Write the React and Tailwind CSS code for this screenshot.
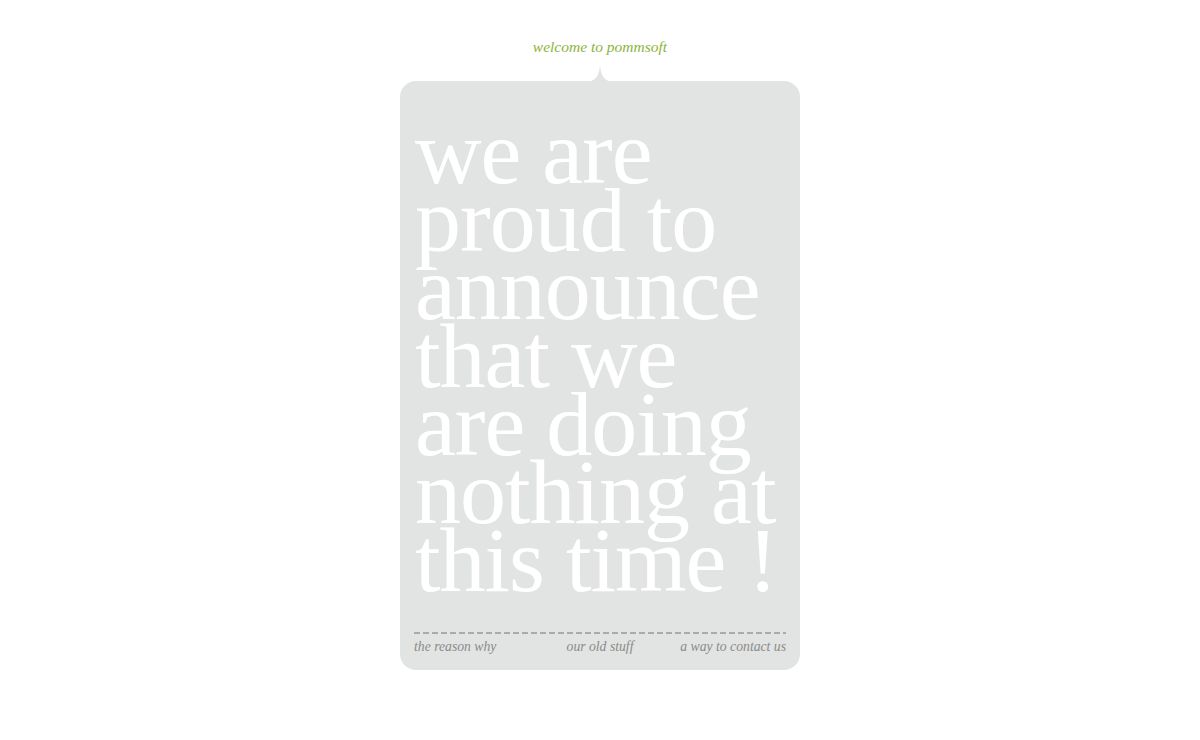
export default function App() {
  return (
    <div className="min-h-screen w-full bg-white flex flex-col items-center" style={{ fontFamily: '"Liberation Serif", Georgia, serif' }}>
      <div className="mt-[38px] h-[18px] text-[15.5px] italic text-[#8cb43c] leading-[18px]">welcome to pommsoft</div>
      <div className="relative mt-[25px] w-[400px] h-[589px] rounded-[16px] bg-[#e2e4e3] flex flex-col px-[14px]">
        <svg className="absolute left-[184px] top-[-17px]" width="32" height="18" viewBox="0 0 32 18">
          <path d="M0 18 C9 18 15 15 16 1 C17 15 23 18 32 18 Z" fill="#e2e4e3" />
        </svg>
        <div className="mt-[37px] ml-[1px] text-white text-[92px] leading-[68px] tracking-[-1px] whitespace-nowrap">
          <div>we are</div>
          <div>proud to</div>
          <div>announce</div>
          <div>that we</div>
          <div>are doing</div>
          <div>nothing at</div>
          <div>this time !</div>
        </div>
        <div className="mt-auto mb-[15px] flex flex-col">
          <div className="h-[2px] bg-[repeating-linear-gradient(to_right,#aaaaaa_0,#aaaaaa_6px,transparent_6px,transparent_9px)]" />
          <div className="mt-[5px] grid grid-cols-3 text-[13.7px] italic text-[#8a8a8a] leading-[16px]">
            <span className="text-left whitespace-nowrap">the reason why</span>
            <span className="text-center whitespace-nowrap">our old stuff</span>
            <span className="text-right whitespace-nowrap">a way to contact us</span>
          </div>
        </div>
      </div>
    </div>
  );
}
